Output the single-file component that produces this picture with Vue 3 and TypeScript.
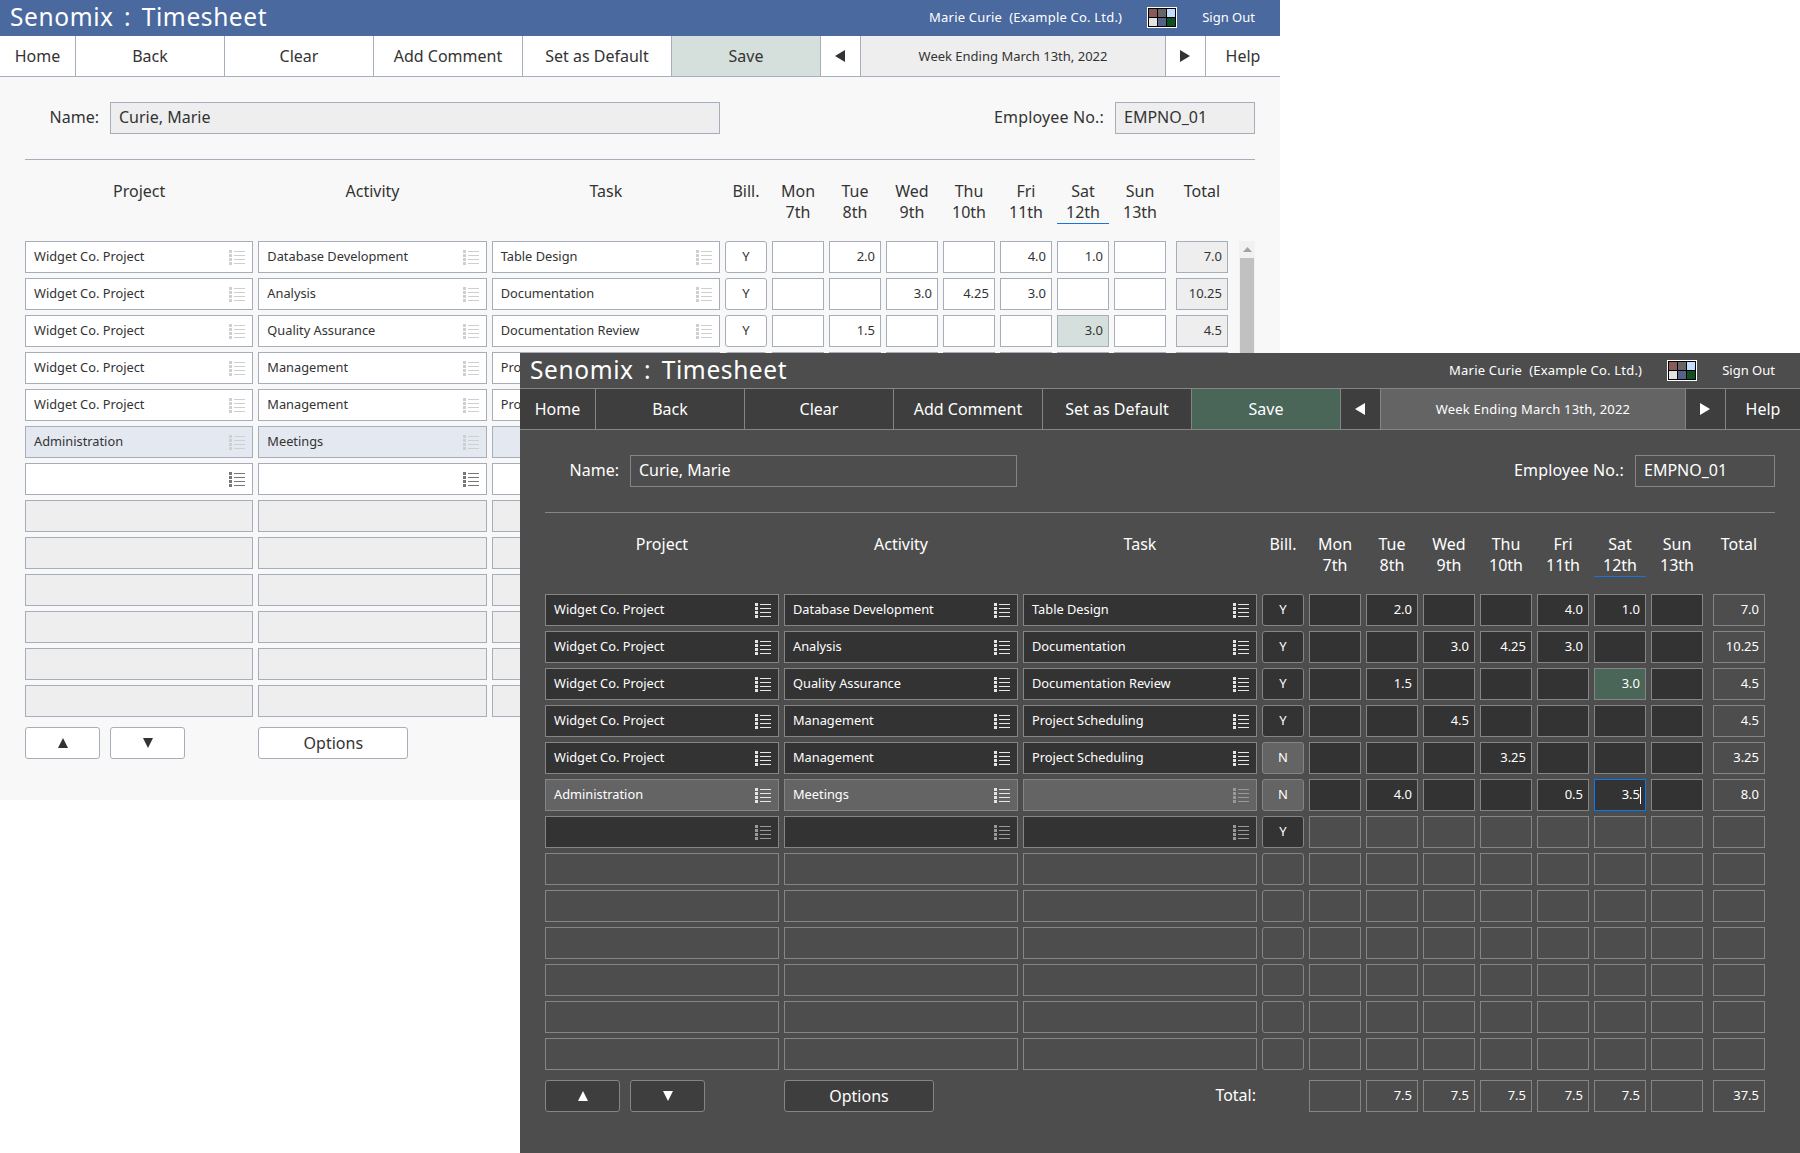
<script setup lang="ts">
interface Row {
  project: string
  activity: string
  task: string
  bill: string
  days: string[]
  total: string
  kind: 'filled' | 'admin' | 'entry' | 'off'
}

const blank = ['', '', '', '', '', '', '']

const rows: Row[] = [
  { project: 'Widget Co. Project', activity: 'Database Development', task: 'Table Design', bill: 'Y', days: ['', '2.0', '', '', '4.0', '1.0', ''], total: '7.0', kind: 'filled' },
  { project: 'Widget Co. Project', activity: 'Analysis', task: 'Documentation', bill: 'Y', days: ['', '', '3.0', '4.25', '3.0', '', ''], total: '10.25', kind: 'filled' },
  { project: 'Widget Co. Project', activity: 'Quality Assurance', task: 'Documentation Review', bill: 'Y', days: ['', '1.5', '', '', '', '3.0', ''], total: '4.5', kind: 'filled' },
  { project: 'Widget Co. Project', activity: 'Management', task: 'Project Scheduling', bill: 'Y', days: ['', '', '4.5', '', '', '', ''], total: '4.5', kind: 'filled' },
  { project: 'Widget Co. Project', activity: 'Management', task: 'Project Scheduling', bill: 'N', days: ['', '', '', '3.25', '', '', ''], total: '3.25', kind: 'filled' },
  { project: 'Administration', activity: 'Meetings', task: '', bill: 'N', days: ['', '4.0', '', '', '0.5', '3.5', ''], total: '8.0', kind: 'admin' },
  { project: '', activity: '', task: '', bill: 'Y', days: blank, total: '', kind: 'entry' },
  ...Array.from({ length: 6 }, (): Row => ({ project: '', activity: '', task: '', bill: '', days: blank, total: '', kind: 'off' })),
]

const tabs = [
  { label: 'Home', cls: 'short' },
  { label: 'Back', cls: '' },
  { label: 'Clear', cls: '' },
  { label: 'Add Comment', cls: '' },
  { label: 'Set as Default', cls: '' },
  { label: 'Save', cls: 'save' },
]

const heads = [
  ['Mon', '7th'], ['Tue', '8th'], ['Wed', '9th'], ['Thu', '10th'],
  ['Fri', '11th'], ['Sat', '12th'], ['Sun', '13th'],
]

const weekTotals = ['', '7.5', '7.5', '7.5', '7.5', '7.5', '']
const swatch = ['#8a5a5a', '#666666', '#c6dcff', '#e2e2e2', '#56618a', '#0f5022']

const windows = ['light', 'dark']

function textCols(r: Row) {
  return [r.project, r.activity, r.task]
}

// first two columns of the admin row have a value, the task is still empty
function iconDim(r: Row, col: number, win: string) {
  if (win === 'light') return r.kind !== 'entry'
  if (r.kind === 'entry') return true
  return r.kind === 'admin' && col === 2
}
</script>

<template>
  <div class="desk">
    <section v-for="win in windows" :key="win" class="win" :class="win">
      <header class="top">
        <h1 class="title">Senomix : Timesheet</h1>
        <span class="user">Marie Curie &nbsp;(Example Co. Ltd.)</span>
        <span class="swatch">
          <i v-for="c in swatch" :key="c" :style="{ background: c }"></i>
        </span>
        <a class="signout">Sign Out</a>
      </header>

      <nav class="tools">
        <div v-for="t in tabs" :key="t.label" class="tab" :class="t.cls">{{ t.label }}</div>
        <div class="tab arrow">
          <svg width="10" height="12" viewBox="0 0 10 12"><polygon points="10,0 10,12 0,6" /></svg>
        </div>
        <div class="tab week">Week Ending March 13th, 2022</div>
        <div class="tab arrow">
          <svg width="10" height="12" viewBox="0 0 10 12"><polygon points="0,0 0,12 10,6" /></svg>
        </div>
        <div class="tab help">Help</div>
      </nav>

      <div class="body">
        <div class="who">
          <label class="who-label">Name:</label>
          <div class="field name">Curie, Marie</div>
          <label class="who-label emp">Employee No.:</label>
          <div class="field empno">EMPNO_01</div>
        </div>

        <div class="rule"></div>

        <div class="sheet">
          <div class="sheet-main">
            <div class="grid heads">
              <div class="head">Project</div>
              <div class="head">Activity</div>
              <div class="head">Task</div>
              <div class="head">Bill.</div>
              <div v-for="(h, i) in heads" :key="h[0]" class="head day" :class="{ today: i === 5 }">
                {{ h[0] }}<br />{{ h[1] }}
              </div>
              <div class="head sum">Total</div>
            </div>

            <div class="rows">
              <div v-for="(r, ri) in rows" :key="ri" class="grid" :class="r.kind">
                <div v-for="(txt, ci) in textCols(r)" :key="ci" class="cell text">
                  <span class="val">{{ txt }}</span>
                  <svg
                    v-if="r.kind !== 'off'"
                    class="list"
                    :class="{ dim: iconDim(r, ci, win) }"
                    width="16"
                    height="15"
                    viewBox="0 0 16 15"
                  >
                    <path d="M0 0h3v3H0zM0 4h3v3H0zM0 8h3v3H0zM0 12h3v3H0zM5 1h11v1H5zM5 5h11v1H5zM5 9h11v1H5zM5 13h11v1H5z" />
                  </svg>
                </div>
                <div class="cell bill" :class="{ no: r.bill === 'N' }">{{ r.bill }}</div>
                <div
                  v-for="(d, di) in r.days"
                  :key="di"
                  class="cell num"
                  :class="{ hit: ri === 2 && di === 5, focus: ri === 5 && di === 5 }"
                >{{ d }}<i v-if="ri === 5 && di === 5" class="caret"></i></div>
                <div class="cell num sum">{{ r.total }}</div>
              </div>
            </div>

            <div class="grid foot">
              <div class="pager">
                <button class="btn">
                  <svg width="10" height="10" viewBox="0 0 10 10"><polygon points="5,0 10,10 0,10" /></svg>
                </button>
                <button class="btn">
                  <svg width="10" height="10" viewBox="0 0 10 10"><polygon points="0,0 10,0 5,10" /></svg>
                </button>
              </div>
              <div><button class="btn options">Options</button></div>
              <div class="foot-label">Total:</div>
              <div></div>
              <div v-for="(w, i) in weekTotals" :key="i" class="cell num off-cell">{{ w }}</div>
              <div class="cell num sum off-cell">37.5</div>
            </div>
          </div>

          <div v-if="win === 'light'" class="scroll">
            <div class="scroll-up">
              <svg width="9" height="5" viewBox="0 0 9 5"><polygon points="4.5,0 9,5 0,5" /></svg>
            </div>
            <div class="scroll-thumb"></div>
          </div>
        </div>
      </div>
    </section>
  </div>
</template>

<style scoped>
.desk {
  position: relative;
  width: 1800px;
  height: 1153px;
  overflow: hidden;
  background: #fff;
  font-family: "Noto Sans", "Liberation Sans", sans-serif;
}

.win {
  position: absolute;
  width: 1280px;
  height: 800px;
  display: flex;
  flex-direction: column;
  background: var(--bg);
  color: var(--ink);
}

.light {
  left: 0;
  top: 0;
  --bg: #f8f8f8;
  --ink: #333333;
  --line: #a5aeba;
  --top: #4a699e;
  --top-line: #4a699e;
  --bar: #ffffff;
  --input: #ffffff;
  --off: #eeeeee;
  --mark: #e4e8f0;
  --save: #d5e0dc;
  --week: #eeeeee;
  --icon: #777777;
  --icon-dim: #cfcfcf;
  --name-w: 610px;
}

.dark {
  left: 520px;
  top: 353px;
  --bg: #4d4d4d;
  --ink: #ffffff;
  --line: #858585;
  --top: #4d4d4d;
  --top-line: #858585;
  --bar: #3e3e3e;
  --input: #333333;
  --off: #4d4d4d;
  --mark: #646464;
  --save: #4a6658;
  --week: #646464;
  --icon: #e6e6e6;
  --icon-dim: #999999;
  --name-w: 387px;
}

.top {
  flex: none;
  height: 36px;
  box-sizing: border-box;
  display: flex;
  align-items: center;
  padding: 0 25px 0 10px;
  background: var(--top);
  border-bottom: 1px solid var(--top-line);
  color: #fff;
}

.title {
  margin: -1px auto 0 0;
  font-size: 24.5px;
  font-weight: 400;
  line-height: 34px;
  letter-spacing: 0.6px;
  word-spacing: 3.5px;
}

.user {
  margin-top: -2px;
  font-size: 13px;
  letter-spacing: 0.2px;
}

.swatch {
  display: grid;
  grid-template-columns: repeat(3, 1fr);
  gap: 1px;
  width: 30px;
  height: 21px;
  margin: 0 25px;
  box-sizing: border-box;
  border: 1px solid #000;
  outline: 1px solid #fff;
  outline-offset: -1px;
  padding: 1px;
  background: #000;
}

.swatch i {
  display: block;
}

.signout {
  margin-top: -2px;
  font-size: 13px;
}

.tools {
  flex: none;
  height: 41px;
  box-sizing: border-box;
  display: flex;
  background: var(--bar);
  border-bottom: 1px solid var(--line);
}

.tab {
  flex: none;
  width: 149px;
  box-sizing: border-box;
  display: flex;
  align-items: center;
  justify-content: center;
  border-right: 1px solid var(--line);
  font-size: 16px;
}

.tab.short {
  width: 76px;
}

.tab.help {
  flex: 1;
  border-right: 0;
}

.tab.save {
  background: var(--save);
}

.tab.arrow {
  width: 40px;
  padding-right: 1px;
}

.tab.arrow polygon {
  fill: var(--ink);
}

.tab.week {
  width: 305px;
  background: var(--week);
  font-size: 13px;
}

.dark .tab.week {
  letter-spacing: 0.2px;
}

.body {
  flex: 1;
  padding: 25px 25px 0;
}

.who {
  display: flex;
  align-items: center;
}

.who-label {
  width: 74px;
  margin-right: 11px;
  margin-top: -2px;
  text-align: right;
  font-size: 16px;
}

.who-label.emp {
  width: auto;
  margin-left: auto;
  letter-spacing: 0.15px;
}

.field {
  box-sizing: border-box;
  height: 32px;
  padding: 0 8px;
  line-height: 28px;
  border: 1px solid var(--line);
  background: var(--off);
  font-size: 16px;
}

.field.name {
  width: var(--name-w);
}

.field.empno {
  width: 140px;
}

.rule {
  height: 1px;
  margin-top: 25px;
  background: var(--line);
}

.sheet {
  display: flex;
  justify-content: space-between;
  align-items: flex-start;
}

.sheet-main {
  flex: 1;
  min-width: 0;
}

.light .sheet-main {
  max-width: 1203px;
}

.dark .sheet-main {
  max-width: 1220px;
}

.grid {
  display: grid;
  grid-template-columns: repeat(3, minmax(0, 1fr)) 42px repeat(7, 52px) 57px;
  gap: 5px;
}

.heads {
  height: 81px;
  padding-top: 21px;
  box-sizing: border-box;
}

.head {
  align-self: start;
  height: 43px;
  text-align: center;
  font-size: 16px;
  line-height: 21px;
}

.head.today {
  box-shadow: inset 0 -1px 0 #1a73d9;
}

.head.sum {
  margin-left: 5px;
}

.rows {
  display: flex;
  flex-direction: column;
  gap: 5px;
}

.cell {
  box-sizing: border-box;
  height: 32px;
  border: 1px solid var(--line);
  background: var(--input);
  font-size: 13px;
  line-height: 29px;
  white-space: nowrap;
  overflow: hidden;
}

.cell.text {
  display: flex;
  align-items: center;
  justify-content: space-between;
  padding: 0 7px 0 8px;
  font-size: 12.8px;
}

.val {
  margin-bottom: 3px;
  line-height: 20px;
}

.list {
  flex: none;
  fill: var(--icon);
}

.list.dim {
  fill: var(--icon-dim);
}

.cell.bill {
  text-align: center;
  border-radius: 3px;
}

.cell.bill.no {
  background: var(--mark);
}

.cell.num {
  position: relative;
  padding-right: 5px;
  text-align: right;
}

.cell.sum {
  margin-left: 5px;
  background: var(--off);
}

.cell.hit {
  background: var(--save);
}

.cell.focus {
  border-color: #0a78f0;
}

.caret {
  position: absolute;
  top: 7px;
  right: 4px;
  width: 1px;
  height: 17px;
  background: var(--ink);
}

.admin .cell.text {
  background: var(--mark);
}

.entry .cell.num,
.off .cell {
  background: var(--off);
}

.foot {
  margin-top: 10px;
}

.pager {
  display: flex;
  gap: 10px;
}

.btn {
  box-sizing: border-box;
  width: 75px;
  height: 32px;
  padding: 0;
  border: 1px solid var(--line);
  border-radius: 3px;
  background: var(--bar);
  color: var(--ink);
  font: inherit;
  font-size: 16px;
}

.btn polygon {
  fill: var(--ink);
}

.btn svg {
  display: block;
  margin: 0 auto;
}

.btn.options {
  width: 150px;
}

.foot-label {
  justify-self: end;
  padding-right: 1px;
  font-size: 16px;
  line-height: 31px;
}

.off-cell {
  background: var(--off);
}

.scroll {
  flex: none;
  width: 16px;
  margin-top: 81px;
  height: 476px;
  background: #f1f1f1;
}

.scroll-up {
  height: 17px;
  display: flex;
  align-items: center;
  justify-content: center;
}

.scroll-up polygon {
  fill: #a3a3a3;
}

.scroll-thumb {
  height: 300px;
  margin: 0 1px;
  background: #c1c1c1;
}
</style>

<style>
html,
body {
  margin: 0;
  background: #fff;
}
</style>
